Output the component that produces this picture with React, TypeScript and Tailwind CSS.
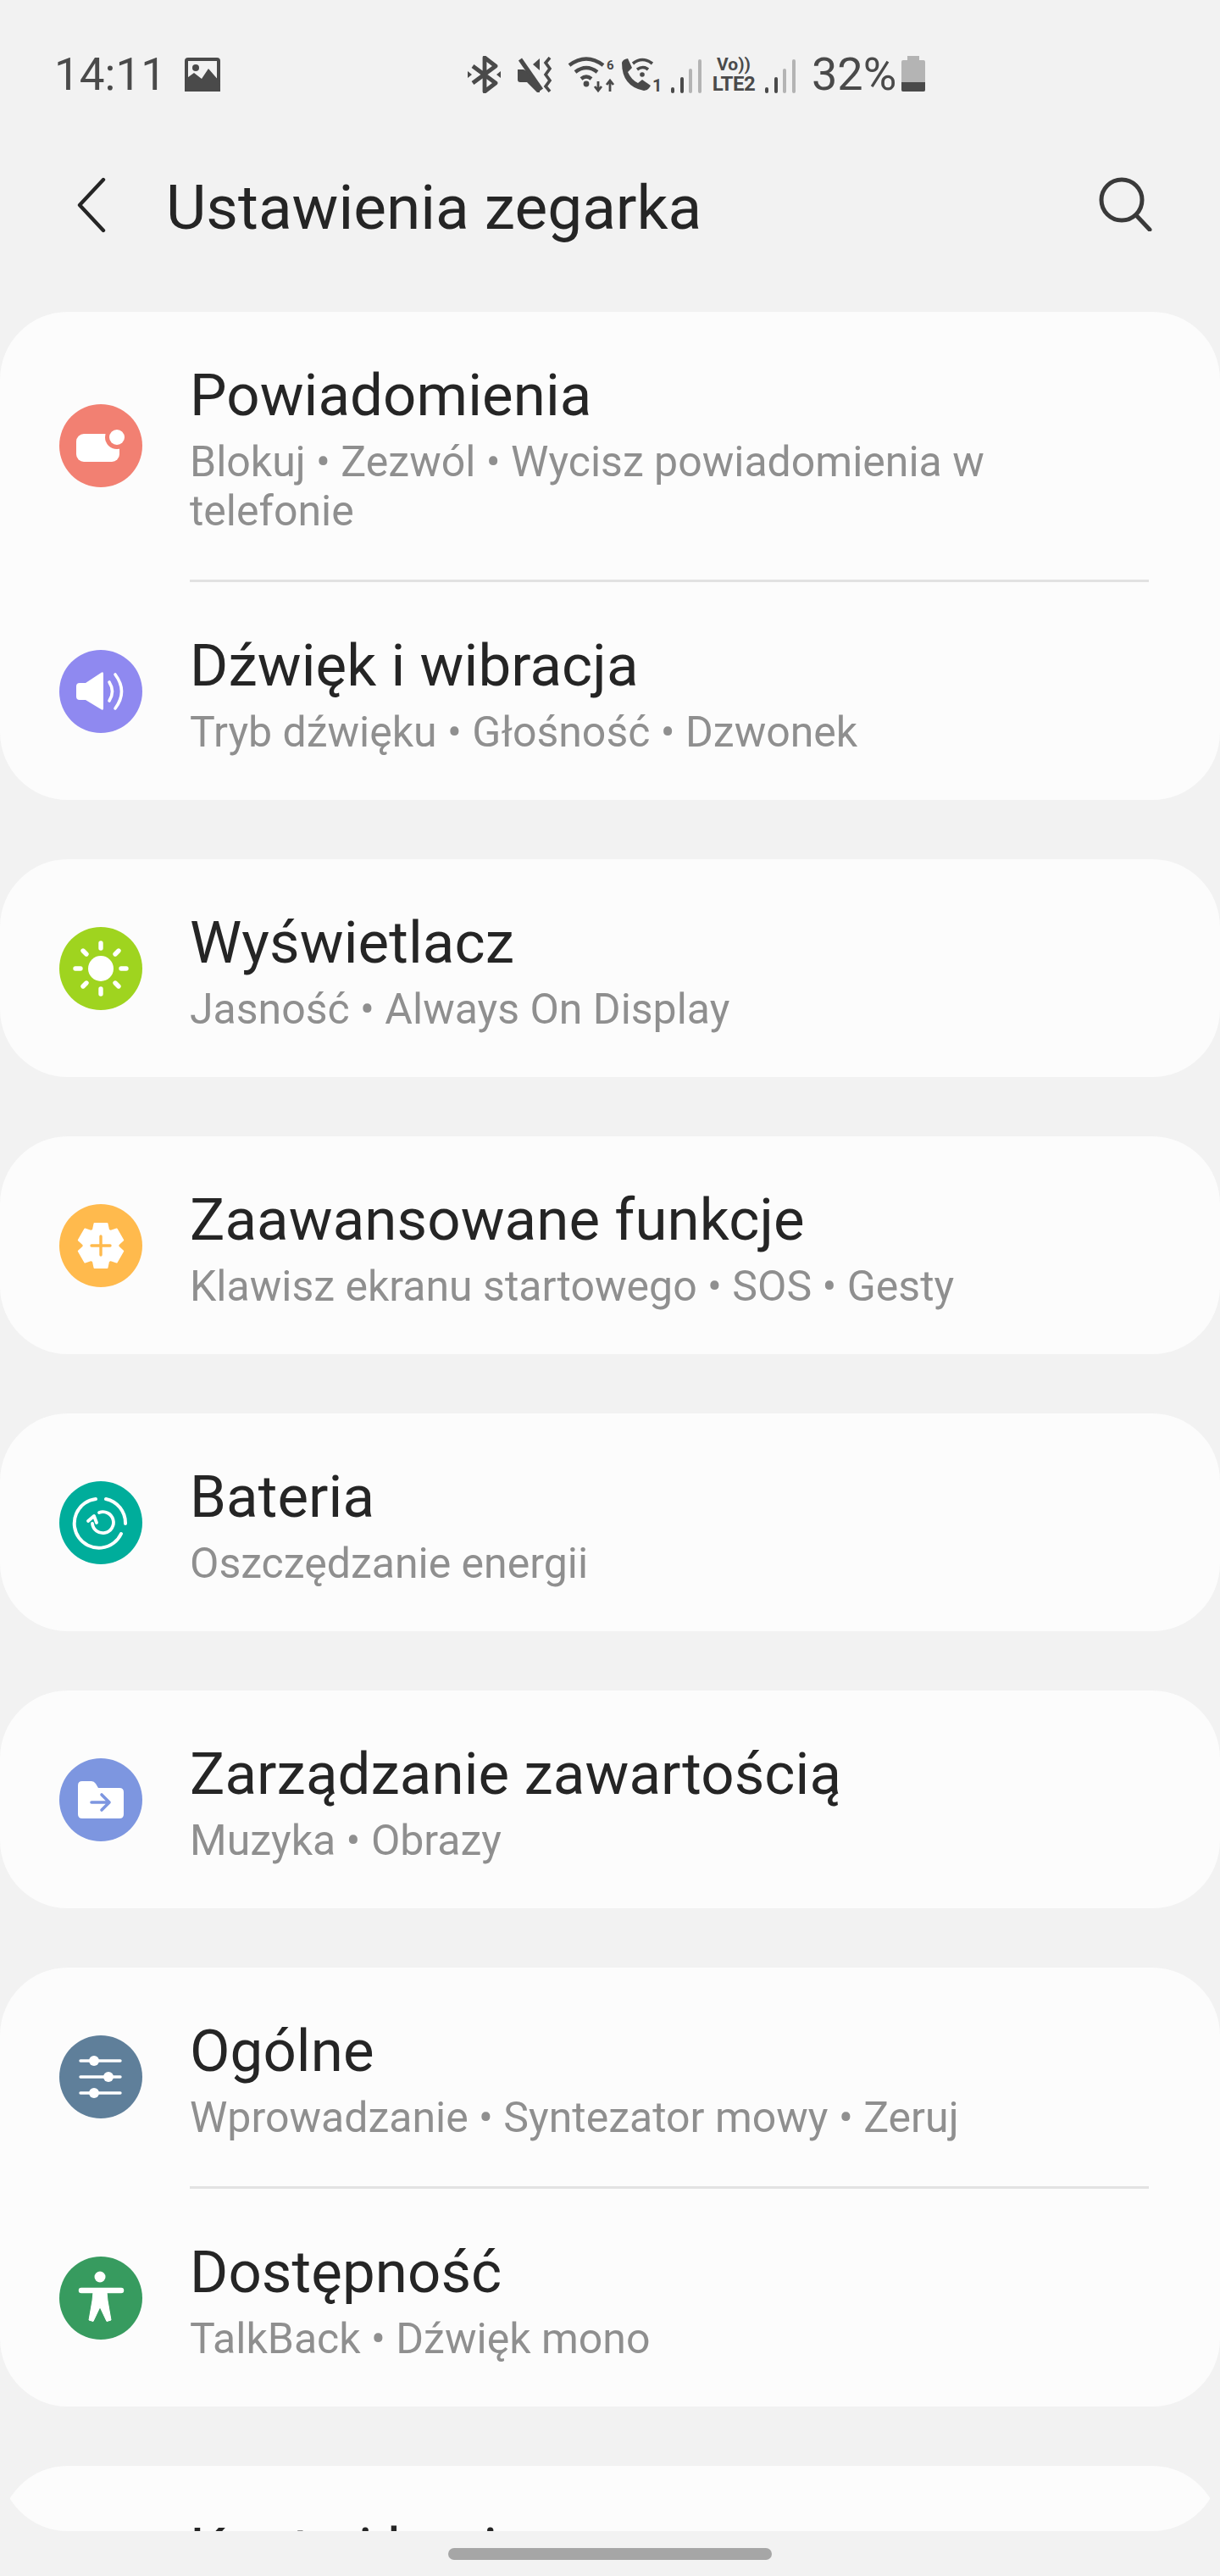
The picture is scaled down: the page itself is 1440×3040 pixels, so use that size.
const F = "font-['Roboto',sans-serif]";

function gearPoints() {
  const pts: string[] = [];
  for (let i = 0; i < 6; i++) {
    const a = (Math.PI / 3) * i - Math.PI / 2;
    const p = (r: number, d: number) => `${(49 + r * Math.cos(a + d)).toFixed(2)},${(49 + r * Math.sin(a + d)).toFixed(2)}`;
    pts.push(p(20.5, -0.46), p(27, -0.28), p(27, 0.28), p(20.5, 0.46));
  }
  return pts.join(" ");
}

function Circle({ color, children }: { color: string; children: React.ReactNode }) {
  return (
    <svg width="98" height="98" viewBox="0 0 98 98" className="shrink-0">
      <circle cx="49" cy="49" r="49" fill={color} />
      {children}
    </svg>
  );
}

const icons = {
  notif: (
    <Circle color="#f28072">
      <rect x="20" y="35" width="51" height="33" rx="9" fill="#fff" />
      <circle cx="68" cy="39" r="14" fill="#f28072" />
      <circle cx="68" cy="39" r="9" fill="#fff" />
    </Circle>
  ),
  sound: (
    <Circle color="#8f89f0">
      <path d="M24 39h7L50 26.5q2-1 2 1.5v41q0 2.5-2 1.5L31 59h-7q-4 0-4-4V43q0-4 4-4z" fill="#fff" />
      <path d="M59 38q7 11 0 22M66 29q15 20 0 40" fill="none" stroke="#fff" strokeWidth="3.6" strokeLinecap="round" />
    </Circle>
  ),
  sun: (
    <Circle color="#9fd41f">
      <circle cx="49" cy="49" r="15" fill="#fff" />
      <g stroke="#fff" strokeWidth="5.4" strokeLinecap="round">
        <path d="M49 19v6M49 73v6M19 49h6M73 49h6M28 28l4 4M66 66l4 4M28 70l4-4M66 32l4-4" />
      </g>
    </Circle>
  ),
  gear: (
    <Circle color="#ffba4d">
      <polygon points={gearPoints()} fill="#fff" stroke="#fff" strokeWidth="2" strokeLinejoin="round" />
      <path d="M38 49h22M49 38v22" stroke="#ffba4d" strokeWidth="3.4" strokeLinecap="round" />
    </Circle>
  ),
  battery: (
    <Circle color="#00ad9b">
      <path d="M43 21A29 29 0 1 0 73 62" fill="none" stroke="#fff" strokeWidth="4" strokeLinecap="round" />
      <path d="M55 21A29 29 0 0 1 78 50" fill="none" stroke="#fff" strokeWidth="4" strokeLinecap="round" />
      <path d="M47 37A12.5 12.5 0 1 1 39 50" fill="none" stroke="#fff" strokeWidth="3.8" strokeLinecap="round" />
      <path d="M34 47l7-6 3 8" fill="none" stroke="#fff" strokeWidth="3.8" strokeLinecap="round" strokeLinejoin="round" />
    </Circle>
  ),
  folder: (
    <Circle color="#7d96e0">
      <path d="M27 27h11q3 0 5 3l3 5h25q5 0 5 5v26q0 5-5 5H27q-5 0-5-5V32q0-5 5-5z" fill="#fff" />
      <path d="M38 52h21M50 43l9 9-9 9" fill="none" stroke="#7d96e0" strokeWidth="3.6" strokeLinecap="round" strokeLinejoin="round" />
    </Circle>
  ),
  sliders: (
    <Circle color="#5f7f9a">
      <path d="M25 30h47M25 49h47M25 68h47" stroke="#fff" strokeWidth="3.4" strokeLinecap="round" />
      <circle cx="41" cy="30" r="6" fill="#fff" />
      <circle cx="58" cy="49" r="6" fill="#fff" />
      <circle cx="41" cy="68" r="6" fill="#fff" />
    </Circle>
  ),
  person: (
    <Circle color="#379b5f">
      <circle cx="48" cy="24" r="6.5" fill="#fff" />
      <path d="M26 40h47" stroke="#fff" strokeWidth="6.5" strokeLinecap="round" />
      <path d="M40 42h16l1 10 4 23-5 1.5-8-17-8 17-5-1.5 4-23z" fill="#fff" stroke="#fff" strokeWidth="1" strokeLinejoin="round" />
    </Circle>
  ),
};

function Row({ icon, title, sub, h }: { icon: React.ReactNode; title: string; sub: string; h: string }) {
  return (
    <div className={`flex items-center pl-[70px] pr-[84px] ${h}`}>
      {icon}
      <div className="ml-[56px] flex-1 min-w-0 pt-[5px]">
        <div className="text-[69px] leading-[84px] text-[#252525] tracking-[0.1px]">{title}</div>
        <div className="mt-[7px] min-h-[58px] text-[50px] leading-[58px] text-[#8f8f8f]">{sub}</div>
      </div>
    </div>
  );
}

function Divider() {
  return <div className="ml-[224px] mr-[84px] h-[3px] bg-[#e2e2e2]" />;
}

function Bars() {
  return (
    <svg width="36" height="40" viewBox="0 0 36 40" className="shrink-0">
      <rect x="0" y="33" width="4" height="7" rx="2" fill="#4a4a4a" />
      <rect x="11" y="21" width="4" height="19" rx="2" fill="#4a4a4a" />
      <rect x="21" y="11" width="4" height="29" rx="2" fill="#b4b4b4" />
      <rect x="32" y="0" width="4" height="40" rx="2" fill="#b4b4b4" />
    </svg>
  );
}

function StatusBar() {
  const c = "#4a4a4a";
  return (
    <div className="h-[178px] pt-[64px] pl-[64px] flex items-start">
      <div className="text-[53px] leading-[48px] text-[#4a4a4a] w-[154px]">14:11</div>
      <svg width="42" height="40" viewBox="0 0 42 40" className="mt-[4px]">
        <rect width="42" height="40" rx="4" fill={c} />
        <rect x="4" y="4" width="34" height="32" fill="#f2f2f2" />
        <path d="M0 40V26l11-8 9 7 8-12 14 16v11z" fill={c} />
        <rect x="0" y="30" width="42" height="10" rx="3" fill={c} />
        <circle cx="13" cy="12" r="4" fill={c} />
      </svg>
      <svg width="39" height="44" viewBox="0 0 39 44" className="ml-[292px] mt-[2px]">
        <path d="M6 12l27 20-13 10V2l13 10L6 32" fill="none" stroke={c} strokeWidth="4.8" strokeLinejoin="round" />
        <path d="M0 18l5 4-5 4zM39 18l-5 4 5 4z" fill={c} />
      </svg>
      <svg width="42" height="42" viewBox="0 0 42 42" className="ml-[20px] mt-[3px]">
        <path d="M0 15h7l4 2 15 16v9h-3L11 30H3q-3 0-3-3z" fill={c} />
        <path d="M3 3l25 36" stroke={c} strokeWidth="5" fill="none" />
        <path d="M18 9l8-7v14z" fill={c} />
        <path d="M38 1l-5 6 5 7-5 7 5 7-5 7 5 6" fill="none" stroke={c} strokeWidth="3.6" />
      </svg>
      <svg width="57" height="44" viewBox="0 0 57 44" className="ml-[17px] mt-[2px]">
        <path d="M2 11q20-15 40 0M9 19q13-10 26 0M16 27q6-5 12 0" fill="none" stroke={c} strokeWidth="4.4" />
        <circle cx="22" cy="33" r="3.4" fill={c} />
        <path d="M36 30v10M32 36l4 5 4-5M50 42V30M46 34l4-5 4 5" fill="none" stroke={c} strokeWidth="2.8" />
        <text x="46" y="16" fontSize="15" fontWeight="700" fill={c} fontFamily="Roboto, sans-serif">6</text>
      </svg>
      <svg width="52" height="44" viewBox="0 0 52 44" className="ml-[5px] mt-[2px] overflow-visible">
        <path d="M9 3l5 11-5 5q4 9 12 13l5-4 10 7q-3 6-8 6Q2 36 2 8q1-4 7-5z" fill={c} />
        <path d="M15 9q11-9 23 0M20 16q7-5 13 0" fill="none" stroke={c} strokeWidth="3.6" />
        <circle cx="26" cy="22" r="2.8" fill={c} />
        <text x="38" y="42" fontSize="20" fontWeight="700" fill={c} fontFamily="Roboto, sans-serif">1</text>
      </svg>
      <div className="ml-[8px] mt-[6px]"><Bars /></div>
      <div className="ml-[10px] mt-[1px] w-[56px] text-[#4a4a4a] font-bold text-center">
        <div className="text-[21px] leading-[22px]">Vo))</div>
        <div className="text-[24px] leading-[24px] tracking-[-0.5px]">LTE2</div>
      </div>
      <div className="ml-[9px] mt-[6px]"><Bars /></div>
      <div className="text-[54px] leading-[48px] text-[#4a4a4a] ml-[19px] w-[106px]">32%</div>
      <svg width="28" height="42" viewBox="0 0 28 42" className="mt-[2px]">
        <path d="M7 0h14v5h5q2 0 2 2v33q0 2-2 2H2q-2 0-2-2V7q0-2 2-2h5z" fill="#b4b4b4" />
        <path d="M0 31h28v9q0 2-2 2H2q-2 0-2-2z" fill={c} />
      </svg>
    </div>
  );
}

function Header() {
  return (
    <div className="h-[190px] flex items-start pt-[30px]">
      <svg width="34" height="66" viewBox="0 0 34 66" className="ml-[91px] mt-[1px] shrink-0">
        <path d="M31 3L3 33l28 30" fill="none" stroke="#252525" strokeWidth="4.4" strokeLinecap="round" strokeLinejoin="round" />
      </svg>
      <div className="ml-[71px] text-[73px] leading-[84px] text-[#252525] flex-1 -mt-[5px]">Ustawienia zegarka</div>
      <svg width="64" height="64" viewBox="0 0 64 64" className="mr-[80px] mt-[1px] shrink-0">
        <circle cx="28" cy="27" r="24" fill="none" stroke="#3a3a3a" strokeWidth="5" />
        <path d="M45 45l16 17" stroke="#3a3a3a" strokeWidth="5" strokeLinecap="round" />
      </svg>
    </div>
  );
}

export default function App() {
  const card = "bg-[#fcfcfc] rounded-[80px] shrink-0";
  return (
    <div className={`${F} w-[1440px] h-[3040px] bg-[#f2f2f2] flex flex-col overflow-hidden`}>
      <StatusBar />
      <Header />
      <div className="h-[2619px] overflow-hidden rounded-b-[80px] flex flex-col gap-[70px]">
        <div className={card}>
          <Row icon={icons.notif} h="h-[316px]" title="Powiadomienia" sub="Blokuj • Zezwól • Wycisz powiadomienia w telefonie" />
          <Divider />
          <Row icon={icons.sound} h="h-[257px]" title="Dźwięk i wibracja" sub="Tryb dźwięku • Głośność • Dzwonek" />
        </div>
        <div className={card}>
          <Row icon={icons.sun} h="h-[257px]" title="Wyświetlacz" sub="Jasność • Always On Display" />
        </div>
        <div className={card}>
          <Row icon={icons.gear} h="h-[257px]" title="Zaawansowane funkcje" sub="Klawisz ekranu startowego • SOS • Gesty" />
        </div>
        <div className={card}>
          <Row icon={icons.battery} h="h-[257px]" title="Bateria" sub="Oszczędzanie energii" />
        </div>
        <div className={card}>
          <Row icon={icons.folder} h="h-[257px]" title="Zarządzanie zawartością" sub="Muzyka • Obrazy" />
        </div>
        <div className={card}>
          <Row icon={icons.sliders} h="h-[258px]" title="Ogólne" sub="Wprowadzanie • Syntezator mowy • Zeruj" />
          <Divider />
          <Row icon={icons.person} h="h-[257px]" title="Dostępność" sub="TalkBack • Dźwięk mono" />
        </div>
        <div className={card}>
          <Row icon={<div className="w-[98px] h-[98px]" />} h="h-[257px]" title="Konto i kopia zapasowa" sub="" />
        </div>
      </div>
      <div className="flex-1 flex justify-center pt-[20px]">
        <div className="w-[382px] h-[14px] rounded-full bg-[#a6a6a6]" />
      </div>
    </div>
  );
}
